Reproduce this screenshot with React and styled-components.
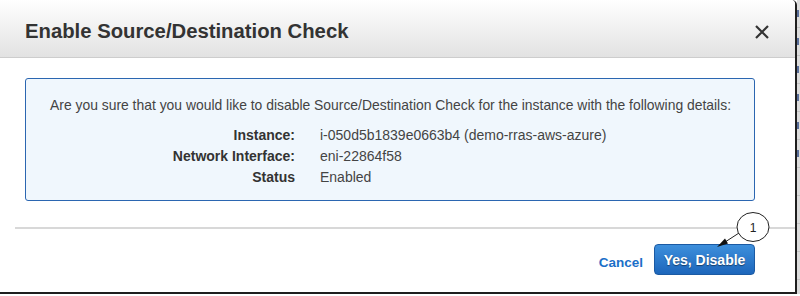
import React from 'react';
import styled, { createGlobalStyle } from 'styled-components';

const GlobalStyle = createGlobalStyle`
  html, body {
    margin: 0;
    padding: 0;
    background: #ffffff;
  }
  body {
    font-family: "Liberation Sans", Arial, sans-serif;
  }
`;

const Screen = styled.div`
  width: 800px;
  height: 296px;
  overflow: hidden;
`;

const Row = styled.div`
  display: flex;
  height: 294px;
`;

const Modal = styled.div`
  position: relative;
  width: 795px;
  flex-shrink: 0;
  background: #fff;
  border-right: 2px solid #1e1e1e;
  border-bottom: 2px solid #1e1e1e;
  border-top-right-radius: 5px;
  display: flex;
  flex-direction: column;
`;

const Backdrop = styled.div`
  flex: 1;
  background: #dcdcdc;
  display: flex;
  flex-direction: column;
`;

const BackdropCell = styled.div`
  height: 27px;
  border-bottom: 1px solid #c4c4c4;
  display: flex;
  align-items: center;
`;

const Glyph = styled.span`
  width: 2px;
  height: 7px;
  background: ${(p) => (p.$on ? '#5a6f9a' : 'transparent')};
`;

const Header = styled.div`
  height: 58px;
  box-sizing: border-box;
  padding: 6px 26px 0 25px;
  display: flex;
  align-items: center;
  justify-content: space-between;
  background: linear-gradient(#ffffff, #e2e2e2);
  border-bottom: 1px solid #cdcdcd;
  border-top-right-radius: 4px;
`;

const Title = styled.h1`
  margin: 0;
  font-size: 20.3px;
  font-weight: bold;
  color: #333;
`;

const Close = styled.button`
  border: none;
  background: none;
  padding: 0;
  width: 14px;
  height: 14px;
  display: flex;
  cursor: pointer;
`;

const Body = styled.div`
  padding: 20px 40px 0 25px;
`;

const InfoBox = styled.div`
  border: 1px solid #2b66b1;
  border-radius: 3px;
  background: #f0f7fd;
  padding: 16px 24px 12px;
  color: #444;
  font-size: 14px;
`;

const Message = styled.div`
  line-height: 20px;
  font-size: 13.9px;
  white-space: nowrap;
`;

const Details = styled.div`
  margin-top: 10px;
  display: grid;
  grid-template-columns: 245px auto;
  column-gap: 25px;
  line-height: 21px;
`;

const Label = styled.div`
  text-align: right;
  font-weight: bold;
  color: #333;
`;

const Value = styled.div`
  color: #444;
`;

const Footer = styled.div`
  margin: 26px 0 0 15px;
  border-top: 2px solid #d8d8d8;
  padding: 15px 40px 0 0;
  display: flex;
  justify-content: flex-end;
  align-items: center;
  gap: 11px;
`;

const LinkButton = styled.button`
  border: none;
  background: none;
  padding: 0;
  margin-top: 6px;
  font-family: inherit;
  font-size: 13.5px;
  font-weight: bold;
  color: #1b6fc8;
  cursor: pointer;
`;

const PrimaryButton = styled.button`
  width: 101px;
  height: 31px;
  border: 1px solid #1b5aa3;
  border-radius: 4px;
  background: linear-gradient(#3d8fdc, #1d66bb);
  color: #fff;
  font-family: inherit;
  font-size: 14px;
  font-weight: bold;
  text-shadow: 0 1px 1px rgba(0, 0, 0, 0.45);
  cursor: pointer;
`;

const Callout = styled.svg`
  position: absolute;
  left: 712px;
  top: 208px;
  overflow: visible;
`;

const details = [
  ['Instance:', 'i-050d5b1839e0663b4 (demo-rras-aws-azure)'],
  ['Network Interface:', 'eni-22864f58'],
  ['Status', 'Enabled'],
];

export default function App() {
  return (
    <Screen>
      <GlobalStyle />
      <Row>
        <Modal>
          <Header>
            <Title>Enable Source/Destination Check</Title>
            <Close aria-label="Close">
              <svg width="14" height="14" viewBox="0 0 14 14">
                <path d="M1 1 L13 13 M13 1 L1 13" stroke="#333" strokeWidth="2.2" />
              </svg>
            </Close>
          </Header>
          <Body>
            <InfoBox>
              <Message>
                Are you sure that you would like to disable Source/Destination Check for the instance with the following details:
              </Message>
              <Details>
                {details.map(([label, value]) => (
                  <React.Fragment key={label}>
                    <Label>{label}</Label>
                    <Value>{value}</Value>
                  </React.Fragment>
                ))}
              </Details>
            </InfoBox>
          </Body>
          <Footer>
            <LinkButton>Cancel</LinkButton>
            <PrimaryButton>Yes, Disable</PrimaryButton>
          </Footer>
          <Callout width="60" height="40" viewBox="0 0 60 40">
            <ellipse cx="41" cy="19" rx="16" ry="14.5" fill="#fff" stroke="#222" strokeWidth="1" />
            <text x="41" y="23.5" textAnchor="middle" fontSize="12" fontFamily="Liberation Sans, Arial, sans-serif" fill="#222">1</text>
            <line x1="27" y1="25" x2="10" y2="36" stroke="#222" strokeWidth="1" />
            <polygon points="5,39 13,30.5 16,35.5" fill="#111" />
          </Callout>
        </Modal>
        <Backdrop>
          {[1, 1, 1, 1, 1, 1, 0, 0, 0, 0].map((on, i) => (
            <BackdropCell key={i}>
              <Glyph $on={on} />
            </BackdropCell>
          ))}
        </Backdrop>
      </Row>
    </Screen>
  );
}
